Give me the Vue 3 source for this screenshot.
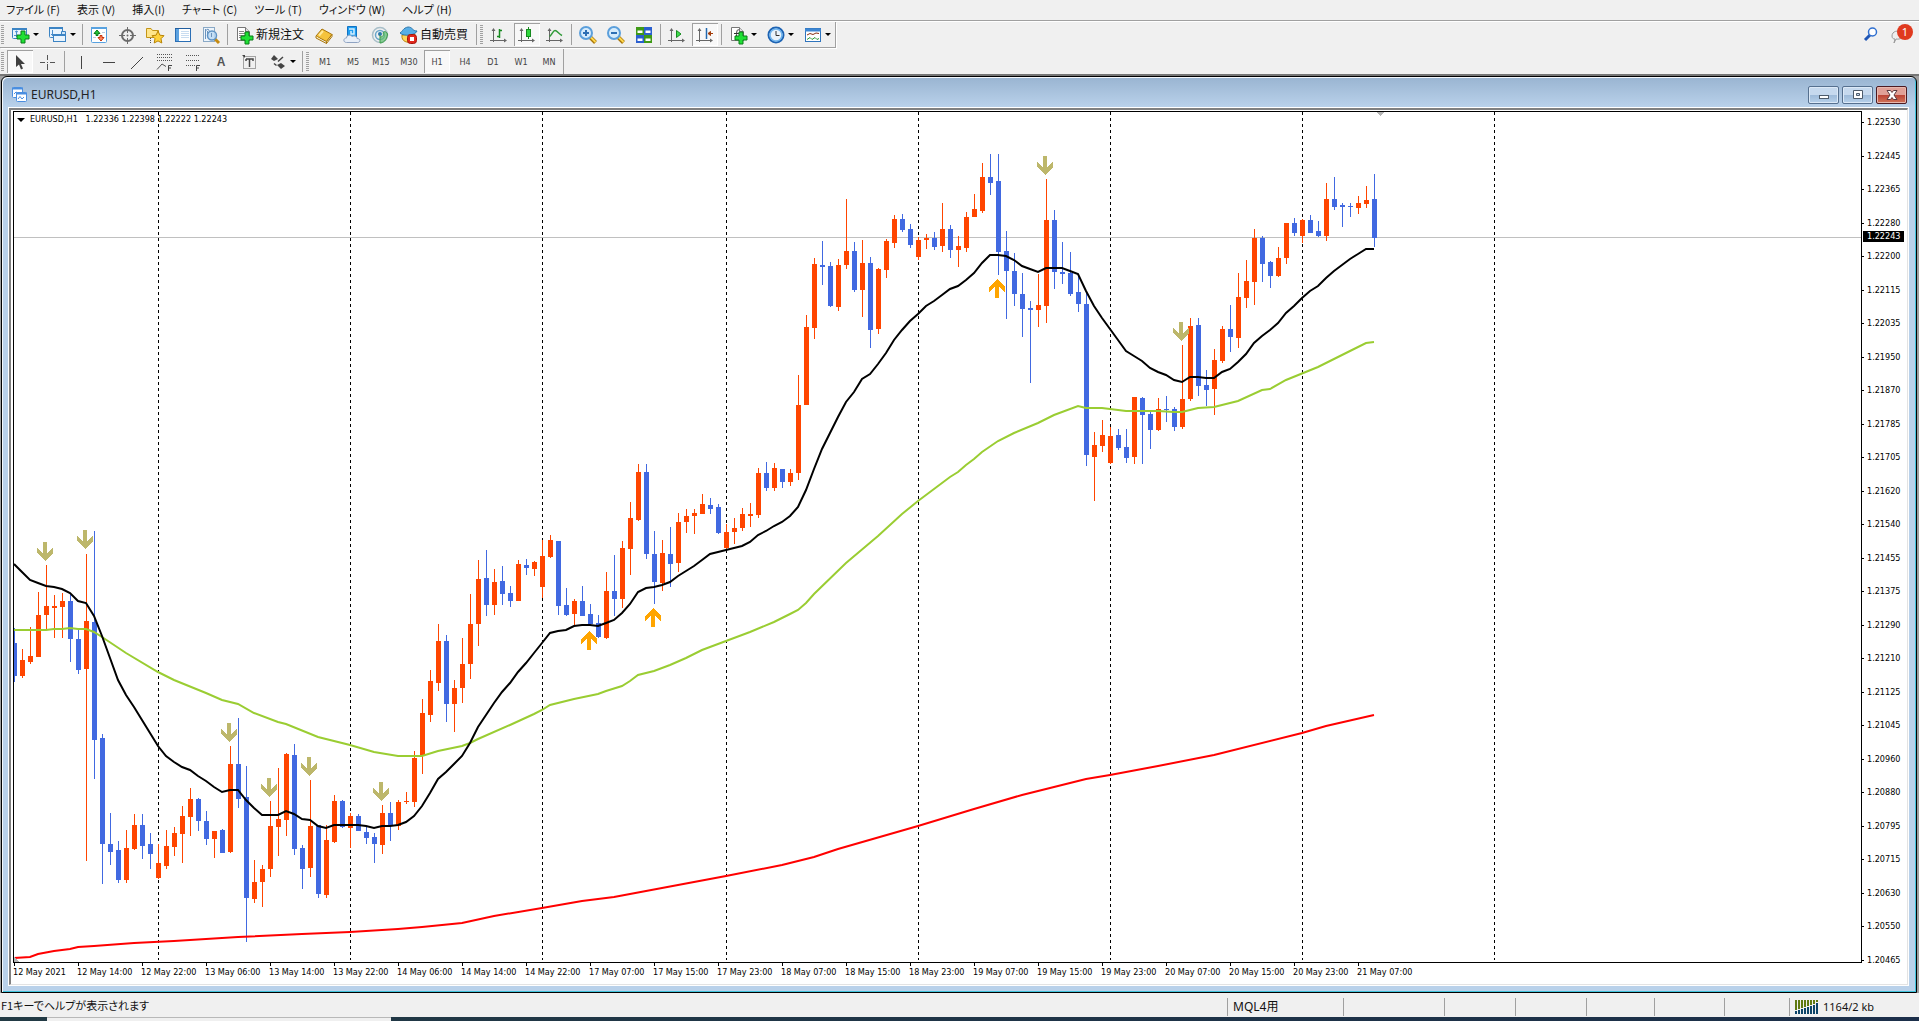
<script setup>
const menus = ['ファイル (F)', '表示 (V)', '挿入(I)', 'チャート (C)', 'ツール (T)', 'ウィンドウ (W)', 'ヘルプ (H)']

const axes = '<path d="M4.500 4V17M1 15.500H17" stroke="#666" fill="none"/><path d="M2.500 6L4.500 3L6.500 6ZM15 13.500L18 15.500L15 17.500Z" fill="#666"/>'
const plus = (x, y) => `<path transform="translate(${x} ${y})" d="M-2-6H2V-2H6V2H2V6H-2V2H-6V-2H-2Z" fill="#1fe035" stroke="#0b7d18"/>`
const doc = '<path d="M2.500 2.500H10.500L14.500 6.500V15.500H2.500Z" fill="#fff" stroke="#777"/><path d="M10.500 2.500V6.500H14.500" fill="#ddd" stroke="#777"/>'
const lens = (sign) => `<path d="M11.500 11.500L17.500 17.500" stroke="#a87508" stroke-width="4"/><path d="M12 11.500L17.500 17" stroke="#ffd84c" stroke-width="2"/><circle cx="8" cy="8" r="6" fill="#d5ebfc" stroke="#5b9fdb" stroke-width="2"/><path d="${sign}" stroke="#2d6fb4" stroke-width="2"/>`

const icons = {
  newChart: '<rect x="1.500" y="3.500" width="14" height="10" rx="1" fill="#e9f4fd" stroke="#3c84c4"/><path d="M1 4H16" stroke="#3c84c4" stroke-width="2"/><path d="M5.500 6V12M3 10.500H9M4 7L5.500 6L7 7" stroke="#4b8fce" fill="none"/>' + plus(12, 12),
  profiles: '<rect x="1.500" y="2.500" width="13" height="10" rx="1" fill="#e9f4fd" stroke="#3c84c4"/><path d="M1 3H15" stroke="#3c84c4" stroke-width="2"/><path d="M4.500 5V11M3 9.500H8" stroke="#4b8fce"/><path d="M5.500 16.500V12.500H13.500V6.500H17.500V16.500Z" fill="#cfe5f8" stroke="#3c84c4"/><rect x="5.500" y="10.500" width="12" height="6" fill="#e9f4fd" stroke="#3c84c4"/><path d="M5 10H18" stroke="#3c84c4" stroke-width="2"/>',
  market: '<rect x="2.500" y="2.500" width="15" height="15" rx="1" fill="#fff" stroke="#58a2e0"/><path d="M2 3H18" stroke="#58a2e0" stroke-width="2"/><path d="M8 5L11 8.500H9V10.500H7V8.500H5Z" fill="#24c43a" stroke="#0b7d18"/><path d="M12 16L9 12.500H11V10.500H13V12.500H15Z" fill="#ff8a60" stroke="#c8340c"/><path d="M4 12.500H7M13 7.500H16" stroke="#bcd"/>',
  target: '<circle cx="10.500" cy="10.500" r="5.500" fill="none" stroke="#6b6b6b" stroke-width="2"/><path d="M10.500 2V8M10.500 13V19M2 10.500H8M13 10.500H19" stroke="#6b6b6b" stroke-width="1"/><circle cx="10.500" cy="10.500" r="1" fill="#6b6b6b"/>',
  navigator: '<path d="M1.500 3.500H6L7.500 5.500H13.500V12.500H1.500Z" fill="#ffe58a" stroke="#c39517"/><path d="M5.500 13V18" stroke="#555" stroke-dasharray="1 1"/><path d="M13 6L14.900 10.200L19 10.700L16 13.700L16.800 18L13 15.900L9.200 18L10 13.700L7 10.700L11.100 10.200Z" fill="#ffd23c" stroke="#b78406"/>',
  terminal: '<rect x="2.500" y="3.500" width="15" height="13" fill="#fff" stroke="#2b6fb5" stroke-width="1"/><rect x="3" y="4" width="3" height="12" fill="#5da2e0"/><path d="M8 6.500H16M8 8.500H16M8 10.500H16M8 12.500H16" stroke="#c8dcf0"/><path d="M2 3.500H18" stroke="#225f9f" stroke-width="1"/>',
  tester: '<rect x="2.500" y="2.500" width="11" height="14" fill="#eef5fb" stroke="#8aa9c6"/><path d="M4.500 4V14M6.500 6V12M4 6L7 4L9 7" stroke="#6b93bd" fill="none"/><path d="M13.500 13.500L18 18" stroke="#c48a12" stroke-width="3"/><circle cx="11" cy="10.500" r="4.500" fill="#bddaf3" fill-opacity=".85" stroke="#5f93c5" stroke-width="1.500"/><path d="M10.500 8V12" stroke="#6b93bd"/>',
  order: doc + '<path d="M4 6.500H9M4 8.500H12M4 10.500H10M4 12.500H8" stroke="#888"/>' + plus(12, 13),
  editor: '<path d="M2 11L8 4L18 9.500L12.500 16.500Z" fill="#f5c33c" stroke="#a87409"/><path d="M2 11V13L12.500 18.500V16.500L18 9.500V11.500L12.500 18.500" fill="#fff3c4" stroke="#a87409"/><path d="M5 10.500L9 6" stroke="#ffe999" stroke-width="2"/>',
  cloud: '<path d="M5.500 1.500H14.500V12H5.500Z" fill="#1f9ef0" stroke="#1173c4"/><path d="M7 4H12V9H9V6" stroke="#d6efff" stroke-width="1.500" fill="none"/><path d="M4.500 17.500C1 17.500 1 13 4.500 13C4.500 9.500 9 9.500 10 11.500C12.500 10 15 11.500 15 13.500C19 13.500 18.500 17.500 15.500 17.500Z" fill="#e8eef7" stroke="#8fa3c2"/>',
  signal: '<circle cx="10" cy="10" r="7.500" fill="none" stroke="#a9bfc9" stroke-width="1.500"/><circle cx="10" cy="10" r="4.500" fill="none" stroke="#6aa6c9" stroke-width="1.500"/><circle cx="10" cy="9" r="2" fill="#2b79ad"/><path d="M10 10V18C13 18 17 15.500 17.500 9C16 6 14 6 13 8C14 10 13 12 10 12" fill="#5fc06c" fill-opacity=".7" stroke="#3d9c4b"/>',
  robot: '<path d="M3 10C2 17 9 18 13 17L16 9Z" fill="#ffd65c" stroke="#b7860e"/><path d="M1 8C4 6 4 3 9 2C14 2 13 6 18 6C17 10 5 12 1 8Z" fill="#58aee6" stroke="#2f78ac"/><rect x="8.500" y="9.500" width="9" height="9" rx="3" fill="#e2271b" stroke="#a5130b"/><rect x="11" y="12" width="4" height="4" fill="#fff"/>',
  bars: axes + '<path d="M10.500 4V13M8 11.500H10.500M10.500 5.500H13" stroke="#168a1f" fill="none" stroke-width="1.500"/>',
  candles: axes + '<path d="M11.500 2V14" stroke="#168a1f"/><rect x="9.500" y="4.500" width="4" height="7" fill="#2fd63c" stroke="#168a1f"/>',
  line: axes + '<path d="M4.500 11.500C7 10 8 5.500 10 5.500C12 5.500 14 9 17 10.500" stroke="#2f9a38" fill="none" stroke-width="1.500"/>',
  zoomIn: lens('M5 8H11M8 5V11'),
  zoomOut: lens('M5 8H11'),
  tiles: '<rect x="2" y="2" width="8" height="8" fill="#3f9a16"/><rect x="10" y="2" width="8" height="8" fill="#2a5fcf"/><rect x="2" y="10" width="8" height="8" fill="#2a5fcf"/><rect x="10" y="10" width="8" height="8" fill="#3f9a16"/><path d="M3.500 5.500H8.500V8H3.500ZM11.500 5.500H16.500V8H11.500ZM3.500 13.500H8.500V16H3.500ZM11.500 13.500H16.500V16H11.500Z" fill="#fff"/>',
  scroll: axes + '<path d="M9.500 5.500L14 9L9.500 12.500Z" fill="#3edb4b" stroke="#168a1f"/>',
  shift: axes + '<path d="M11.500 3V14" stroke="#2369b0" stroke-width="1.500"/><path d="M13 8.500H18M13 8.500L15.500 6.500V10.500Z" stroke="#a33c0a" fill="#a33c0a"/>',
  indicator: doc + '<path d="M10 5C8 4 7.500 6 7.500 13M5 8.500H10" stroke="#333" fill="none"/>' + plus(12, 13),
  clock: '<circle cx="10" cy="10" r="7.500" fill="#e9f3fb" stroke="#1d63b3" stroke-width="2"/><circle cx="10" cy="10" r="6" fill="none" stroke="#6fb4ee" stroke-width="1.500"/><path d="M10 6V10.500H13.500" stroke="#333" fill="none"/>',
  template: '<rect x="2.500" y="3.500" width="15" height="13" fill="#fff" stroke="#2f74bd"/><path d="M2 5H18" stroke="#3d86d2" stroke-width="3"/><path d="M4 10L7 8.500L10 9.500L13 8L16 8.500" stroke="#8a3214" fill="none"/><path d="M4 14.500L7 12.500L9 14.500L12 12.500L14 14.500L16 13.500" stroke="#2a9a35" fill="none"/>',
  cursor: '<path d="M6 3V15L9 12.500L11 17.500L13 16.500L11 12H15Z" fill="#3f3f3f"/>',
  cross: '<path d="M9.500 3V8M9.500 12V18M2 10.500H7M12 10.500H17M9 10.500H10" stroke="#555"/>',
  vline: '<path d="M10.500 4V17" stroke="#444"/>',
  hline: '<path d="M4 10.500H16" stroke="#444"/>',
  trend: '<path d="M4 17L16 5" stroke="#444"/>',
  channel: '<path d="M2 2.500H18M2 5.500H18M2 8.500H18" stroke="#555" stroke-dasharray="1 1"/><path d="M2 17.500L7 12L11 14.500" stroke="#555" fill="none"/><path d="M13.500 19V13.500H17M13.500 16H16" stroke="#444" fill="none"/>',
  fibo: '<path d="M3 3.500H17M3 8.500H17M3 13.500H12" stroke="#555" stroke-dasharray="1 1"/><path d="M13.500 19V13.500H17M13.500 16H16" stroke="#444" fill="none"/>',
  label: '<rect x="4.500" y="4.500" width="12" height="12" fill="none" stroke="#555" stroke-dasharray="1 1"/><path d="M7 7H14V9M10.500 7V15M7 7V9" stroke="#444" stroke-width="1.500" fill="none"/><path d="M3 3H6V6Z" fill="#444"/>',
  shapes: '<path d="M6 3L10 7L6 9L3 7ZM13 17L9 13L13 11L17 14Z" fill="#444"/><path d="M6 11.500L8.500 13.500M10 9.500L15 5" stroke="#444" fill="none" stroke-width="1.500"/>'
}

const bar1 = [
  { icon: 'newChart', drop: true, tip: '新規チャート' },
  { icon: 'profiles', drop: true, tip: '組表示' },
  'sep',
  { icon: 'market', tip: '気配値表示' },
  { icon: 'target', tip: 'データウィンドウ' },
  { icon: 'navigator', tip: 'ナビゲーター' },
  { icon: 'terminal', tip: 'ターミナル' },
  { icon: 'tester', tip: 'ストラテジーテスター' },
  'sep',
  { icon: 'order', text: '新規注文' },
  { icon: 'editor', tip: 'メタエディター' },
  { icon: 'cloud', tip: 'VPS' },
  { icon: 'signal', tip: 'シグナル' },
  { icon: 'robot', text: '自動売買' },
  'sep', 'grip',
  { icon: 'bars', tip: 'バーチャート' },
  { icon: 'candles', on: true, tip: 'ローソク足' },
  { icon: 'line', tip: 'ラインチャート' },
  'sep',
  { icon: 'zoomIn', tip: '拡大' },
  { icon: 'zoomOut', tip: '縮小' },
  { icon: 'tiles', tip: '整列' },
  'sep',
  { icon: 'scroll', tip: '自動スクロール' },
  { icon: 'shift', on: true, tip: 'チャートシフト' },
  'sep',
  { icon: 'indicator', drop: true, tip: 'インディケータ' },
  { icon: 'clock', drop: true, tip: '時間足' },
  { icon: 'template', drop: true, tip: '定型チャート' }
]
const bar2 = [
  { icon: 'cursor', on: true, tip: 'カーソル' },
  { icon: 'cross', tip: 'クロスヘア' },
  'sep',
  { icon: 'vline', tip: '垂直線' },
  { icon: 'hline', tip: '水平線' },
  { icon: 'trend', tip: 'トレンドライン' },
  { icon: 'channel', tip: 'チャネル' },
  { icon: 'fibo', tip: 'フィボナッチ' },
  { letter: 'A', tip: 'テキスト' },
  { icon: 'label', tip: 'ラベル' },
  { icon: 'shapes', drop: true, tip: '矢印' },
  'sep', 'grip',
  ...['M1', 'M5', 'M15', 'M30', 'H1', 'H4', 'D1', 'W1', 'MN'].map((period) => ({ period, on: period === 'H1' }))
]

// One row per bar: high, body top, body bottom, low; u = up, d = down.
const raw = `628 643 676 682 d,649 660 676 678 u,627 656 662 664 u,592 615 657 657 u,565 606 615 630 u,595 606 608 638 u,593 601 607 638 u,595 601 639 662 d,630 639 670 674 d,554 621 669 861 u,
531 622 740 779 d,734 738 844 884 d,813 844 852 865 d,841 850 880 883 d,830 848 880 883 u,814 825 849 850 u,814 825 846 859 d,833 844 854 869 d,844 863 878 879 u,830 846 866 869 u,
827 833 847 856 u,806 816 834 863 u,788 799 817 836 u,798 799 821 831 d,811 821 839 845 d,831 831 839 858 u,829 830 853 853 d,746 764 852 853 u,718 764 799 808 d,766 797 898 942 d,
860 882 899 903 u,865 869 882 907 u,801 826 869 877 u,768 819 827 856 u,753 754 820 836 u,744 755 849 855 d,845 848 869 889 d,780 826 868 877 u,825 825 894 898 d,825 840 895 898 u,
795 801 842 843 u,800 801 827 828 d,813 816 828 848 u,814 816 831 831 d,826 832 838 844 d,833 837 844 863 d,805 813 845 854 u,802 813 826 841 d,800 802 826 830 u,792 801 802 804 u,
751 758 802 807 u,699 713 756 774 u,670 681 715 722 u,624 641 683 691 u,635 641 704 722 d,680 688 704 732 u,638 664 688 703 u,594 624 664 679 u,560 579 624 646 u,550 578 605 616 d,
569 582 605 615 u,566 581 594 605 d,586 593 601 607 d,560 564 601 601 u,559 565 568 575 d,561 562 569 576 u,540 556 587 598 u,535 540 557 558 u,541 541 606 615 d,588 605 615 616 d,
599 601 614 626 u,586 601 616 616 d,604 614 624 626 d,615 623 637 638 d,572 591 638 639 u,555 591 599 616 d,541 548 599 608 u,502 518 549 575 u,464 472 520 521 u,464 472 554 559 d,
531 554 582 604 d,540 553 583 591 u,527 554 564 587 d,513 522 563 572 u,509 516 522 533 u,509 513 516 534 u,494 504 514 514 u,498 505 509 514 d,504 507 533 534 d,524 532 548 549 u,
518 528 532 544 u,508 514 528 531 u,503 514 516 527 u,468 473 515 518 u,462 473 488 491 d,463 468 488 491 u,469 469 482 488 d,469 473 482 486 u,375 405 473 480 u,315 327 405 405 u,
258 264 328 339 u,241 265 267 285 d,262 266 306 307 d,259 265 307 311 u,199 251 265 269 u,242 251 290 292 d,240 263 290 317 u,257 263 330 348 d,268 269 329 334 u,239 241 270 278 u,
215 219 243 248 u,214 219 230 232 d,224 229 245 248 d,237 240 257 260 u,234 238 240 249 u,232 238 247 250 d,203 229 246 252 u,225 229 250 258 d,236 246 250 267 u,212 217 248 252 u,
194 209 217 217 u,163 177 211 213 u,154 177 183 195 d,154 181 252 275 d,231 251 271 319 d,253 271 294 306 d,273 294 309 337 d,301 308 310 383 d,274 305 310 327 u,179 220 306 323 u,
210 220 272 289 d,242 272 274 284 d,252 273 294 296 d,274 292 304 312 d,292 304 455 466 d,432 445 457 501 u,420 435 446 452 u,427 436 463 464 u,429 435 448 450 d,429 447 458 463 d,
397 397 457 464 u,397 398 415 464 d,411 414 430 449 d,398 409 430 431 u,396 409 410 422 d,407 409 427 431 d,345 399 427 429 u,318 326 399 401 u,318 325 386 396 d,370 385 390 406 d,
349 360 389 415 u,326 329 361 363 u,305 329 337 352 d,273 297 338 348 u,260 281 298 308 u,229 238 282 305 u,236 238 264 282 d,261 262 276 288 d,247 258 276 277 u,223 223 258 264 u,
218 223 233 236 d,219 220 236 243 u,215 220 233 233 d,221 231 236 237 d,183 199 236 241 u,177 199 207 210 d,203 205 207 227 d,203 206 207 217 d,196 203 208 214 u,186 200 204 208 u,
174 199 238 247 d`
const barX = (i) => 14 + 8 * i
const candles = raw.split(',').map((row, i) => {
  const [hi, top, bottom, lo, dir] = row.trim().split(' ')
  return { x: barX(i), hi: +hi, top: +top, bottom: +bottom, lo: +lo, dir }
})

const fast = [564, 572, 580, 583, 586, 587, 589, 593, 601, 603, 616, 636, 658, 680, 695, 707, 720, 733, 746, 756, 762, 767, 770, 776, 781, 787, 792, 790, 790, 800, 808, 815, 815, 815, 811, 814, 819, 820, 826, 828, 825, 825, 825, 825, 826, 828, 826, 826, 825, 822, 816, 806, 793, 779, 772, 764, 756, 743, 727, 715, 703, 692, 683, 672, 663, 653, 643, 633, 631, 630, 626, 625, 625, 626, 623, 620, 613, 604, 592, 588, 587, 585, 582, 576, 571, 566, 560, 554, 552, 550, 548, 546, 542, 535, 531, 526, 522, 516, 507, 490, 469, 449, 433, 417, 402, 392, 379, 374, 364, 353, 340, 330, 321, 314, 306, 301, 295, 289, 286, 280, 273, 263, 255, 255, 256, 260, 266, 269, 272, 268, 268, 268, 271, 274, 291, 306, 318, 329, 340, 351, 356, 361, 368, 372, 375, 380, 382, 377, 377, 378, 378, 372, 369, 362, 354, 343, 336, 330, 323, 313, 306, 298, 291, 286, 278, 271, 265, 259, 254, 249, 249].map((y, i) => [i, y])
const mid = [[0, 630], [4, 630], [5, 629], [6, 629], [7, 628], [8, 629], [9, 629], [10, 632], [11, 637], [14, 653], [18, 672], [20, 680], [24, 693], [26, 700], [28, 704], [30, 713], [33, 722], [34, 724], [38, 737], [42, 745], [45, 752], [48, 756], [51, 756], [53, 751], [56, 746], [57, 743], [58, 739], [62, 725], [65, 714], [66, 710], [67, 705], [70, 699], [73, 694], [74, 691], [76, 686], [77, 681], [78, 675], [80, 671], [82, 665], [84, 658], [86, 650], [89, 641], [92, 632], [95, 622], [97, 614], [98, 610], [99, 603], [100, 594], [104, 563], [108, 536], [111, 514], [113, 501], [115, 489], [117, 477], [118, 472], [119, 465], [120, 459], [121, 452], [123, 441], [125, 433], [128, 423], [130, 415], [133, 406], [134, 408], [136, 408], [137, 409], [139, 411], [143, 411], [145, 412], [146, 412], [148, 408], [150, 407], [153, 401], [156, 390], [157, 389], [159, 380], [163, 367], [166, 355], [167, 351], [169, 343], [170, 342]]
const slow = [[0, 958], [2, 957], [3, 954], [5, 951], [7, 949], [8, 947], [10, 946], [15, 943], [20, 941], [28, 937], [36, 934], [42, 932], [48, 929], [51, 927], [56, 923], [60, 916], [66, 908], [71, 901], [75, 897], [79, 891], [89, 876], [96, 865], [100, 857], [103, 849], [113, 826], [120, 809], [126, 795], [134, 779], [137, 775], [143, 766], [150, 755], [161, 733], [164, 726], [170, 715]]
const points = (list) => list.map(([i, y]) => `${barX(i)},${y}`).join(' ')

const sessions = [18, 42, 66, 89, 113, 137, 161, 185].map(barX)
const sells = [[45, 542], [85, 530], [229, 723], [269, 778], [309, 757], [381, 782], [1045, 156], [1181, 322]]
const buys = [[589, 631], [653, 608], [997, 279]]

const prices = Array.from({ length: 26 }, (_, k) => ((122530 - Math.floor(k / 2) * 165 - (k % 2) * 85) / 100000).toFixed(5))
const times = ['12 May 2021', '12 May 14:00', '12 May 22:00', '13 May 06:00', '13 May 14:00', '13 May 22:00', '14 May 06:00', '14 May 14:00', '14 May 22:00', '17 May 07:00', '17 May 15:00', '17 May 23:00', '18 May 07:00', '18 May 15:00', '18 May 23:00', '19 May 07:00', '19 May 15:00', '19 May 23:00', '20 May 07:00', '20 May 15:00', '20 May 23:00', '21 May 07:00']
const blanks = ['c101', 'c71', 'c71', 'c68', 'c70', 'c65']
</script>

<template>
  <div class="app">
    <nav class="menubar">
      <a v-for="m in menus" :key="m" href="#">{{ m }}</a>
    </nav>

    <div class="toolrow">
      <div v-for="(bar, b) in [bar1, bar2]" :key="b" class="toolbar">
        <i class="grip"></i>
        <template v-for="(t, n) in bar" :key="n">
          <i v-if="t === 'sep'" class="sep"></i>
          <i v-else-if="t === 'grip'" class="grip"></i>
          <button v-else type="button" :title="t.tip" :class="['tool', { on: t.on, drop: t.drop, wide: t.text }]">
            <svg v-if="t.icon" class="ico" viewBox="0 0 20 20" v-html="icons[t.icon]"></svg>
            <b v-if="t.letter" class="letter">{{ t.letter }}</b>
            <span v-if="t.period" class="period">{{ t.period }}</span>
            <span v-if="t.text">{{ t.text }}</span>
            <i v-if="t.drop" class="caret"></i>
          </button>
        </template>
      </div>
      <div class="corner">
        <button type="button" title="検索">
          <svg width="16" height="16" viewBox="0 0 16 16"><path d="M2 14L7 9" stroke="#1f55b5" stroke-width="3" /><circle cx="9.500" cy="6" r="4" fill="#fff" stroke="#2f6fd0" stroke-width="1.500" /></svg>
        </button>
        <button type="button" title="チャット">
          <svg width="24" height="22" viewBox="0 0 24 22">
            <path d="M2 13C2 8 8 7 12 9C16 12 12 17 6 16L4 20L5 16C3 16 2 15 2 13Z" fill="#eee" stroke="#999" />
            <circle cx="15" cy="9" r="8" fill="#e03a1f" />
            <text x="15" y="13" text-anchor="middle" class="count">1</text>
          </svg>
        </button>
      </div>
    </div>

    <main class="mdi">
      <section class="window">
        <header class="title">
          <svg width="15" height="15" viewBox="0 0 15 15"><rect x=".5" y=".5" width="10" height="10" rx="1" fill="#fff" stroke="#4a8ee0" /><path d="M0 1.500H11" stroke="#4a8ee0" stroke-width="2" /><path d="M2 7L4 5L6 6" stroke="#4a8ee0" fill="none" /><rect x="4.500" y="5.500" width="10" height="9" rx="1" fill="#fff" stroke="#4a8ee0" /><path d="M4 6.500H15" stroke="#4a8ee0" stroke-width="2" /><path d="M6 12L8 9.500L10 12L12 10" stroke="#4a8ee0" fill="none" /></svg>
          <h1>EURUSD,H1</h1>
          <button type="button" title="最小化" class="cap"><svg width="12" height="12" viewBox="0 0 12 12"><rect x="1.500" y="6.500" width="9" height="3" fill="#fff" stroke="#4d5b6b" /></svg></button>
          <button type="button" title="元に戻す" class="cap"><svg width="12" height="12" viewBox="0 0 12 12"><path d="M1.500 1.500H10.500V9.500H1.500ZM4.500 4.500V6.500H7.500V4.500Z" fill="#fff" fill-rule="evenodd" stroke="#4d5b6b" /></svg></button>
          <button type="button" title="閉じる" class="cap close"><svg width="12" height="12" viewBox="0 0 12 12"><path d="M1 1.500H4.500L6 3.500L7.500 1.500H11L8 6L11 10.500H7.500L6 8.500L4.500 10.500H1L4 6Z" fill="#fff" stroke="#5b3b40" /></svg></button>
        </header>

        <div class="frame">
          <div class="left">
            <div class="plot">
              <svg class="canvas" shape-rendering="crispEdges">
                <g transform="translate(-14 -112)">
                  <path d="M0 237.500H4000" stroke="#c0c0c0" />
                  <path v-for="x in sessions" :key="x" :d="`M${x + 0.5} 112V960`" stroke="#000" stroke-dasharray="3 3" />
                  <g v-for="c in candles" :key="c.x" :class="c.dir">
                    <rect :x="c.x" :y="c.hi" width="1" :height="c.lo - c.hi" />
                    <rect :x="c.x - 2" :y="c.top" width="5" :height="c.bottom - c.top" />
                  </g>
                  <path v-for="s in sells" :key="s[0]" class="sell" :transform="`translate(${s[0]} ${s[1]})`" d="M-2 0H2V11L8 6V11L0 19L-8 11V6L-2 11Z" />
                  <path v-for="s in buys" :key="s[0]" class="buy" :transform="`translate(${s[0]} ${s[1]})`" d="M-2 19H2V8L8 13V8L0 0L-8 8V13L-2 8Z" />
                  <polyline :points="points(slow)" class="ma slow" />
                  <polyline :points="points(mid)" class="ma mid" />
                  <polyline :points="points(fast)" class="ma fast" />
                  <path d="M1376 112H1384L1380 116ZM14 957V962H19Z" fill="#b4b4b4" />
                </g>
              </svg>
              <p class="quote"><i class="caret"></i><span>EURUSD,H1&nbsp;&nbsp; 1.22336 1.22398 1.22222 1.22243</span></p>
            </div>
            <div class="times"><span v-for="t in times" :key="t">{{ t }}</span></div>
          </div>
          <div class="prices">
            <span v-for="p in prices" :key="p">{{ p }}</span>
            <strong>1.22243</strong>
          </div>
        </div>
      </section>
    </main>

    <footer class="status">
      <span class="help">F1キーでヘルプが表示されます</span>
      <span class="cell c116">MQL4用</span>
      <span v-for="(c, n) in blanks" :key="n" :class="['cell', c]"></span>
      <span class="cell c130">
        <svg width="24" height="14" viewBox="0 0 24 14" shape-rendering="crispEdges">
          <path d="M1 0V10M4 0V9M7 0V8M10 0V7M13 0V6M16 0V5M19 0V4M22 0V2" stroke="#5f7a10" stroke-width="2" />
          <path d="M1 11V14M4 10V14M7 9V14M10 8V14M13 7V14M16 6V14M19 5V14M22 3V14" stroke="#0c4468" stroke-width="2" />
        </svg>
        <span class="traffic">1164/2 kb</span>
      </span>
    </footer>
    <div class="taskbar"><i></i></div>
  </div>
</template>

<style>
body { margin: 0; }
</style>

<style scoped>
.app {
  display: flex;
  flex-direction: column;
  height: 100vh;
  min-height: 400px;
  overflow: hidden;
  background: #f0f0f0;
  color: #111;
  font: 12px/16px "Noto Sans", "Noto Sans CJK JP", sans-serif;
}
button {
  border: 0;
  padding: 0;
  background: none;
  color: inherit;
  font: inherit;
}
.menubar {
  display: flex;
  gap: 17px;
  height: 20px;
  padding-left: 6px;
  border-bottom: 1px solid #a0a0a0;
  box-shadow: 0 1px #fff;
  font-family: "Noto Sans CJK JP", sans-serif;
  font-size: 11px;
  line-height: 19px;
  font-feature-settings: "palt";
  white-space: nowrap;
}
.menubar a { color: #111; text-decoration: none; }

.toolrow {
  display: flex;
  flex-direction: column;
  align-items: flex-start;
  gap: 1px;
  margin-top: 1px;
  position: relative;
}
.toolbar {
  display: flex;
  align-items: stretch;
  height: 25px;
  border-right: 1px solid #a0a0a0;
  border-bottom: 1px solid #a0a0a0;
  box-shadow: 1px 1px #fff;
}
.toolbar:nth-child(2) { border-bottom: 0; box-shadow: none; }
.grip {
  width: 3px;
  margin: 3px 2px 3px 1px;
  background: repeating-linear-gradient(#a0a0a0 0 1px, #f0f0f0 1px 2px);
}
.sep {
  width: 1px;
  margin: 2px;
  background: #a0a0a0;
}
.tool {
  display: flex;
  align-items: center;
  justify-content: center;
  width: 26px;
  margin: 1px;
  white-space: nowrap;
}
.tool.on {
  background: #f8f8f8;
  box-shadow: inset 1px 1px #a0a0a0, inset -1px -1px #fff;
}
.tool.drop { width: 37px; margin: 0; gap: 2px; }
.tool.wide { width: auto; margin: 0; padding: 0 6px 0 5px; gap: 1px; }
.ico { flex: none; width: 20px; height: 20px; }
.letter {
  color: #555;
  font: bold 12px/16px "Liberation Sans", sans-serif;
}
.period {
  color: #444;
  font: 9px/12px "DejaVu Sans Condensed", "DejaVu Sans", sans-serif;
}
.caret {
  flex: none;
  width: 0;
  border: 3px solid transparent;
  border-top: 3px solid #000;
  border-bottom: 0;
}
.corner {
  position: absolute;
  top: 1px;
  right: 5px;
  display: flex;
  align-items: center;
  gap: 11px;
}
.corner button { display: flex; }
.count {
  fill: #fff;
  font: 11px "Noto Sans", sans-serif;
}

.mdi {
  flex: 1;
  display: flex;
  min-height: 0;
  padding: 0 2px 0 1px;
  border-top: 2px solid #757575;
  background: #a0a0a0;
}
.window {
  flex: 1;
  display: flex;
  flex-direction: column;
  min-width: 0;
  padding: 0 8px 7px 7px;
  border: 1px solid #000;
  border-radius: 6px 6px 0 0;
  background: linear-gradient(#99b4d1, #b9d1ea 30px);
  box-shadow: inset 1px 1px #f4f8fc, inset -1px -1px #41c3dc;
}
.title {
  display: flex;
  align-items: center;
  gap: 3px;
  height: 27px;
  padding: 4px 1px 0 3px;
}
.title h1 {
  flex: 1;
  margin: 0 0 0 1px;
  color: #222;
  font-size: 12px;
  line-height: 16px;
  font-weight: normal;
}
.title > svg { flex: none; }
.cap {
  display: flex;
  align-items: center;
  justify-content: center;
  width: 31px;
  height: 18px;
  border: 1px solid #56708f;
  border-radius: 2px;
  background: linear-gradient(#c6d9ee 50%, #9dbad9 50%, #b8d1ea);
  box-shadow: inset 0 0 0 1px #dce9f7;
}
.cap.close {
  border-color: #4d1a22;
  background: linear-gradient(#e0a097 50%, #bb4234 50%, #d0755a);
  box-shadow: inset 0 0 0 1px #e8b8ae;
}
.frame {
  flex: 1;
  display: flex;
  min-height: 0;
  padding: 1px 0 0 2px;
  border: 1px solid #e3e3e3;
  border-top: 2px solid #808080;
  border-left: 2px solid #808080;
  outline: 1px solid #fff;
  background: #fff;
  font: 9px/11px "DejaVu Sans Condensed", "DejaVu Sans", sans-serif;
  color: #000;
}
.left {
  flex: 1;
  display: flex;
  flex-direction: column;
  min-width: 0;
}
.plot {
  flex: 1;
  position: relative;
  min-height: 0;
  border: 1px solid #000;
}
.canvas {
  display: block;
  width: 100%;
  height: 100%;
}
.u { fill: #ff4500; }
.d { fill: #4169e1; }
.sell { fill: #bdb76b; }
.buy { fill: #ffa500; }
.ma { fill: none; stroke-width: 2px; shape-rendering: geometricPrecision; }
.slow { stroke: #ff0000; }
.mid { stroke: #9acd32; }
.fast { stroke: #000; }
.quote {
  position: absolute;
  top: 2px;
  left: 3px;
  display: flex;
  align-items: center;
  gap: 5px;
  margin: 0;
}
.quote .caret { border-width: 4px 4px 0; }
.times {
  display: flex;
  height: 21px;
  overflow: hidden;
  white-space: nowrap;
}
.times span {
  position: relative;
  flex: none;
  width: 64px;
  padding-top: 4px;
}
.times span::before {
  content: "";
  position: absolute;
  top: 0;
  left: 1px;
  width: 1px;
  height: 3px;
  background: #000;
}
.prices {
  position: relative;
  display: flex;
  flex-direction: column;
  justify-content: space-between;
  width: 45px;
  padding: 6px 0 18px;
}
.prices span { padding-left: 5px; position: relative; }
.prices span::before {
  content: "";
  position: absolute;
  top: 5px;
  left: 0;
  width: 2px;
  height: 1px;
  background: #000;
}
.prices strong {
  position: absolute;
  top: 120px;
  left: 1px;
  width: 37px;
  padding-left: 4px;
  background: #000;
  color: #fff;
  font-weight: normal;
}

.status {
  display: flex;
  align-items: stretch;
  height: 24px;
  line-height: 24px;
  white-space: nowrap;
}
.help {
  flex: 1;
  min-width: 0;
  padding-left: 1px;
  font-family: "Noto Sans CJK JP", sans-serif;
  font-size: 11px;
  font-feature-settings: "palt";
}
.cell {
  display: flex;
  align-items: center;
  gap: 4px;
  box-sizing: border-box;
  margin: 5px 0 1px;
  padding-left: 5px;
  border-left: 1px solid #a0a0a0;
}
.traffic { font-size: 11px; }
.c116 { width: 116px; }
.c101 { width: 101px; }
.c71 { width: 71px; }
.c68 { width: 68px; }
.c70 { width: 70px; }
.c65 { width: 65px; }
.c130 { width: 130px; }
.taskbar {
  height: 4px;
  padding-left: 47px;
  background: linear-gradient(90deg, #223a44, #1c2f4a);
}
.taskbar i {
  display: block;
  width: 344px;
  height: 3px;
  border-top: 1px solid #b8b8b8;
  background: #f0f0f0;
}
</style>
